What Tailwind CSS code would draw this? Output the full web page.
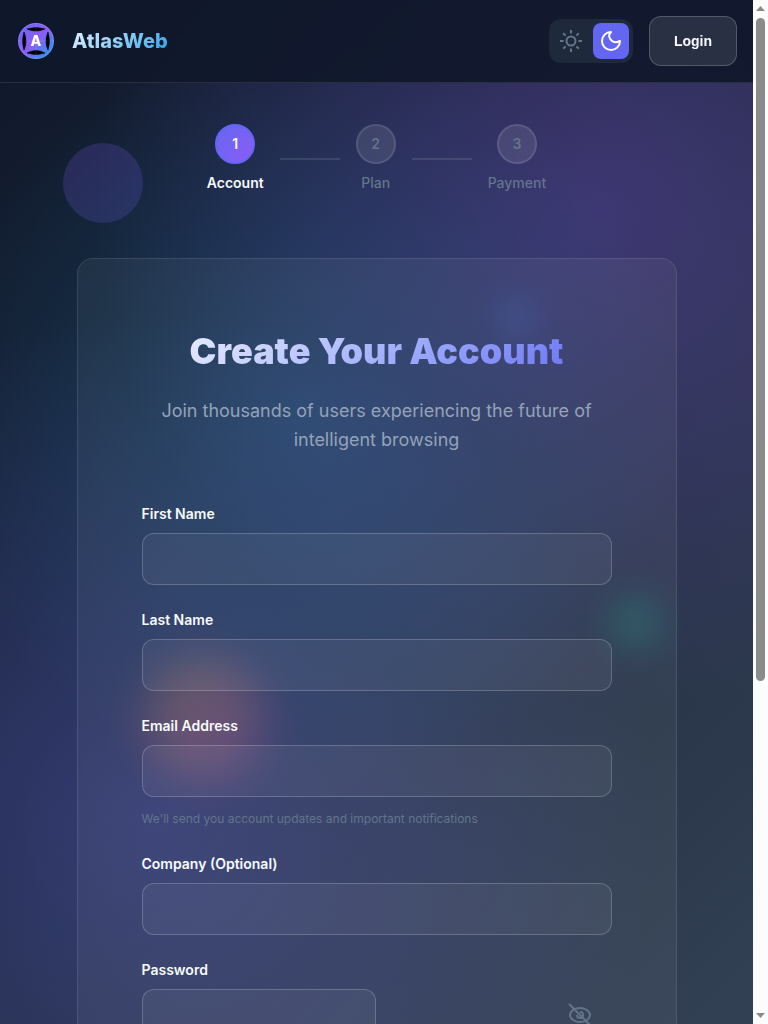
<!DOCTYPE html>
<html lang="en">
<head>
<meta charset="utf-8">
<meta name="viewport" content="width=device-width, initial-scale=1">
<title>AtlasWeb - Create Your Account</title>
<script src="https://cdn.jsdelivr.net/npm/@tailwindcss/browser@4"></script>
</head>
<body class="h-screen overflow-hidden flex bg-[#0f172a] font-['Inter',sans-serif] text-[#f8fafc]">
  <div class="relative isolate flex-1 min-w-0 h-full overflow-hidden bg-[radial-gradient(circle_at_20%_80%,rgba(99,102,241,0.3)_0%,transparent_50%),radial-gradient(circle_at_80%_20%,rgba(139,92,246,0.3)_0%,transparent_50%),radial-gradient(circle_at_40%_40%,rgba(14,165,233,0.2)_0%,transparent_50%),linear-gradient(135deg,#0f172a_0%,#1e293b_50%,#334155_100%)]">
    <!-- floating shapes -->
    <div class="absolute -z-10 left-[63px] top-[143px] size-20 rounded-full opacity-20 bg-linear-135 from-[#8b5cf6] to-[#6366f1]"></div>
    <div class="absolute -z-10 left-[145px] top-[660px] size-[120px] rounded-full opacity-25 blur-[22px] bg-linear-135 from-[#f59e0b] to-[#ec4899]"></div>
    <div class="absolute -z-10 left-[605px] top-[592px] size-[60px] rounded-full opacity-20 blur-[16px] bg-linear-135 from-[#10b981] to-[#14b8a6]"></div>
    <div class="absolute -z-10 left-[498px] top-[298px] size-10 rounded-full opacity-20 blur-[16px] bg-linear-135 from-[#0ea5e9] to-[#6366f1]"></div>

    <header class="flex items-center justify-between p-4 border-b border-white/10 bg-[#0f172a]/90 backdrop-blur-xl">
      <a href="#" class="flex items-center gap-4">
        <svg class="size-10" viewBox="0 0 40 40" aria-hidden="true">
          <defs>
            <linearGradient id="g" x1="0" y1="0" x2="1" y2="1"><stop offset="0" stop-color="#6366f1"/><stop offset=".5" stop-color="#8b5cf6"/><stop offset="1" stop-color="#0ea5e9"/></linearGradient>
          </defs>
          <circle cx="20" cy="20" r="18" fill="url(#g)"/>
          <path d="M11 8Q20 5 29 8Q20 12 11 8ZM11 32Q20 35 29 32Q20 27 11 32ZM8 11Q5 20 8 29Q12 20 8 11ZM32 11Q35 20 32 29Q28 20 32 11Z" fill="#000" stroke="#000" stroke-width=".6"/>
          <path d="M2 20H38M20 2V38" stroke="#fff" stroke-width=".7" opacity=".15"/>
          <circle cx="20" cy="20" r="17.500" fill="none" stroke="#fff" stroke-opacity=".15"/>
          <text x="20" y="25" text-anchor="middle" font-family="Inter, sans-serif" font-size="14" font-weight="800" fill="#fff">A</text>
        </svg>
        <span class="text-xl font-extrabold bg-linear-135 from-[#e0f2fe] to-[#0ea5e9] bg-clip-text text-transparent">AtlasWeb</span>
      </a>
      <div class="flex items-center gap-4">
        <div class="flex gap-1 p-1 rounded-xl bg-[#1e293b]">
          <button type="button" aria-label="Light theme" class="size-9 rounded-lg flex items-center justify-center text-[#64748b]">
            <svg class="size-6" viewBox="0 0 24 24" fill="none" stroke="currentColor" stroke-width="2" aria-hidden="true"><circle cx="12" cy="12" r="4.500"/><path d="M12 1V4.500M12 19.500V23M4.200 4.200L6.600 6.600M17.400 17.400L19.800 19.800M1 12H4.500M19.500 12H23M4.200 19.800L6.600 17.400M17.400 6.600L19.800 4.200"/></svg>
          </button>
          <button type="button" aria-label="Dark theme" class="size-9 rounded-lg flex items-center justify-center bg-[#6366f1] text-white">
            <svg class="size-6" viewBox="0 0 24 24" fill="none" stroke="currentColor" stroke-width="2" stroke-linejoin="round" aria-hidden="true"><path d="M12 3C9 6 10 9 12.500 11.500C15 14 18 13.500 21 12C21 17 17 21 12 21C7 21 3 17 3 12C3 7 7 3 12 3Z"/></svg>
          </button>
        </div>
        <button type="button" class="h-[50px] px-6 rounded-xl border border-white/20 bg-white/10 text-sm font-semibold font-['Liberation_Sans',sans-serif]">Login</button>
      </div>
    </header>

    <main class="px-4 pt-[41px]">
      <ol class="flex items-center justify-center gap-4 text-sm font-semibold leading-[22px] text-[#64748b]">
        <li class="flex flex-col items-center gap-2 text-[#f8fafc]"><span class="size-10 rounded-full border-2 border-[#6366f1] bg-linear-135 from-[#6366f1] to-[#8b5cf6] flex items-center justify-center">1</span><span>Account</span></li>
        <li class="w-[60px] h-0.5 bg-white/10" aria-hidden="true"></li>
        <li class="flex flex-col items-center gap-2"><span class="size-10 rounded-full border-2 border-white/10 bg-white/10 flex items-center justify-center">2</span><span class="font-medium">Plan</span></li>
        <li class="w-[60px] h-0.5 bg-white/10" aria-hidden="true"></li>
        <li class="flex flex-col items-center gap-2"><span class="size-10 rounded-full border-2 border-white/10 bg-white/10 flex items-center justify-center">3</span><span class="font-medium">Payment</span></li>
      </ol>

      <section class="mt-16 mx-auto w-full max-w-[600px] rounded-2xl border border-white/10 bg-white/5 p-16">
        <h1 class="text-center text-4xl font-black leading-[57px] bg-linear-135 from-[#f8fafc] to-[#6366f1] bg-clip-text text-transparent">Create Your Account</h1>
        <p class="mt-4 text-center text-lg leading-[29px] text-[#94a3b8]">Join thousands of users experiencing the future of intelligent browsing</p>
        <form class="mt-[49px] flex flex-col gap-6">
          <div class="flex flex-col gap-2"><label for="first" class="text-sm font-semibold leading-[22px]">First Name</label><input id="first" type="text" class="h-[52px] w-full px-4 rounded-xl border border-white/20 bg-white/5 outline-none"></div>
          <div class="flex flex-col gap-2"><label for="last" class="text-sm font-semibold leading-[22px]">Last Name</label><input id="last" type="text" class="h-[52px] w-full px-4 rounded-xl border border-white/20 bg-white/5 outline-none"></div>
          <div class="flex flex-col gap-2"><label for="email" class="text-sm font-semibold leading-[22px]">Email Address</label><input id="email" type="email" aria-describedby="hint" class="h-[52px] w-full px-4 rounded-xl border border-white/20 bg-white/5 outline-none"><p id="hint" class="mt-1 text-xs leading-5 text-[#64748b]">We'll send you account updates and important notifications</p></div>
          <div class="flex flex-col gap-2"><label for="company" class="text-sm font-semibold leading-[22px]">Company (Optional)</label><input id="company" type="text" class="h-[52px] w-full px-4 rounded-xl border border-white/20 bg-white/5 outline-none"></div>
          <div class="flex flex-col gap-2"><label for="password" class="text-sm font-semibold leading-[22px]">Password</label>
            <div class="flex items-center justify-between pr-5"><input id="password" type="password" class="h-[52px] w-[234px] px-4 rounded-xl border border-white/20 bg-white/5 outline-none">
              <button type="button" aria-label="Show password" class="text-[#64748b]"><svg class="size-6" viewBox="0 0 24 24" fill="none" stroke="currentColor" stroke-width="2" aria-hidden="true"><path d="M2 12C2 8 7 5 12 5C17 5 22 8 22 12C22 16 17 19 12 19C7 19 2 16 2 12ZM1 1L23 23"/><path d="M12 9A3 3 0 1 1 9 12"/></svg></button></div>
          </div>
        </form>
      </section>
    </main>
  </div>

  <!-- scrollbar -->
  <div class="w-[15px] shrink-0 h-full bg-[#fcfcfc] flex flex-col items-center justify-between py-[6px]" aria-hidden="true">
    <div class="flex flex-col items-center gap-[7px] w-full h-2/3">
      <svg class="w-[9px] h-[5px] shrink-0" viewBox="0 0 9 5" fill="#8b8b8b"><path d="M0 5L4.500 0L9 5Z"/></svg>
      <div class="w-[9px] flex-1 rounded-full bg-[#8b8b8b]"></div>
    </div>
    <svg class="w-[9px] h-[5px] shrink-0" viewBox="0 0 9 5" fill="#8b8b8b"><path d="M0 0L4.500 5L9 0Z"/></svg>
  </div>
</body>
</html>
